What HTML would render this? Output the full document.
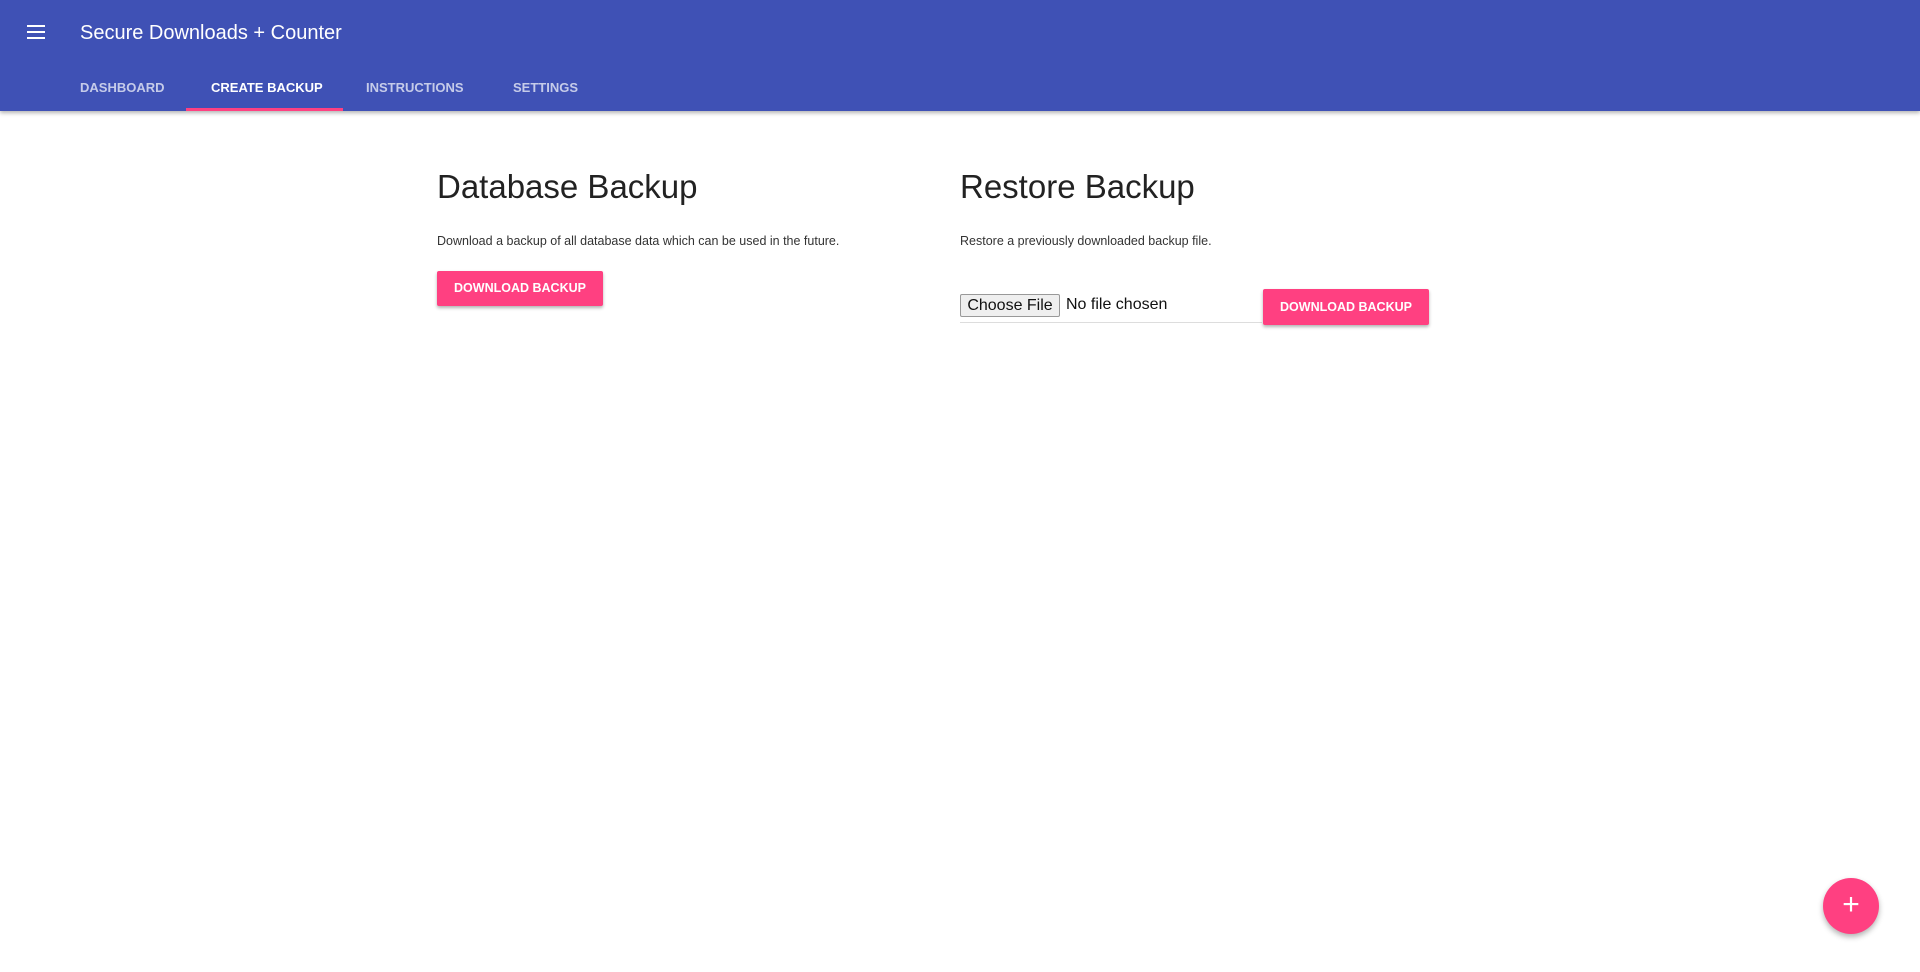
<!DOCTYPE html>
<html><head><style>
body{margin:0;width:1920px;height:972px;background:#fff;font-family:"Liberation Sans",Arial,sans-serif;position:relative;overflow:hidden}
.hdr{position:absolute;left:0;top:0;width:1920px;height:111px;background:#3f51b5;box-shadow:0 2px 4px rgba(0,0,0,.3)}
.ham{position:absolute;left:27px;top:25px;width:18px}
.ham div{height:2px;background:#fff;margin-bottom:4px}
.title{position:absolute;left:80px;top:22px;color:#fff;font-size:20px}
.tab{position:absolute;top:80px;font-size:13px;font-weight:bold;color:rgba(255,255,255,.7)}
.ind{position:absolute;left:186px;top:108px;width:157px;height:3px;background:#ff4081}
h1{position:absolute;margin:0;font-weight:normal;font-size:33px;color:#222;top:168px}
p{position:absolute;margin:0;font-size:12.5px;color:#333;top:234px}
.btn{position:absolute;background:#ff4081;color:#fff;font-weight:bold;font-size:12.5px;text-align:center;border-radius:2px;box-shadow:0 2px 3px rgba(0,0,0,.3)}
.fab{position:absolute;left:1823px;top:878px;width:56px;height:56px;border-radius:50%;background:#ff4081;box-shadow:0 3px 6px rgba(0,0,0,.3);color:#fff;font-size:30px;text-align:center;line-height:54px}
</style></head><body>
<div class="hdr">
<div class="ham"><div></div><div></div><div></div></div>
<div class="title">Secure Downloads + Counter</div>
<div class="tab" style="left:80px">DASHBOARD</div>
<div class="tab" style="left:211px;color:#fff">CREATE BACKUP</div>
<div class="tab" style="left:366px">INSTRUCTIONS</div>
<div class="tab" style="left:513px">SETTINGS</div>
<div class="ind"></div>
</div>
<h1 style="left:437px">Database Backup</h1>
<p style="left:437px">Download a backup of all database data which can be used in the future.</p>
<div class="btn" style="left:437px;top:271px;width:166px;height:35px;line-height:35px">DOWNLOAD BACKUP</div>
<h1 style="left:960px">Restore Backup</h1>
<p style="left:960px">Restore a previously downloaded backup file.</p>
<div style="position:absolute;left:960px;top:294px;width:100px;height:23px;border:1px solid #999;background:#efefef;border-radius:2px;box-sizing:border-box;font-size:16px;line-height:21px;text-align:center;color:#111">Choose File</div>
<div style="position:absolute;left:1066px;top:296px;font-size:16px;color:#111">No file chosen</div>
<div style="position:absolute;left:960px;top:322px;width:302px;height:1px;background:#ddd"></div>
<div class="btn" style="left:1263px;top:289px;width:166px;height:36px;line-height:36px">DOWNLOAD BACKUP</div>
<div class="fab">+</div>
</body></html>
